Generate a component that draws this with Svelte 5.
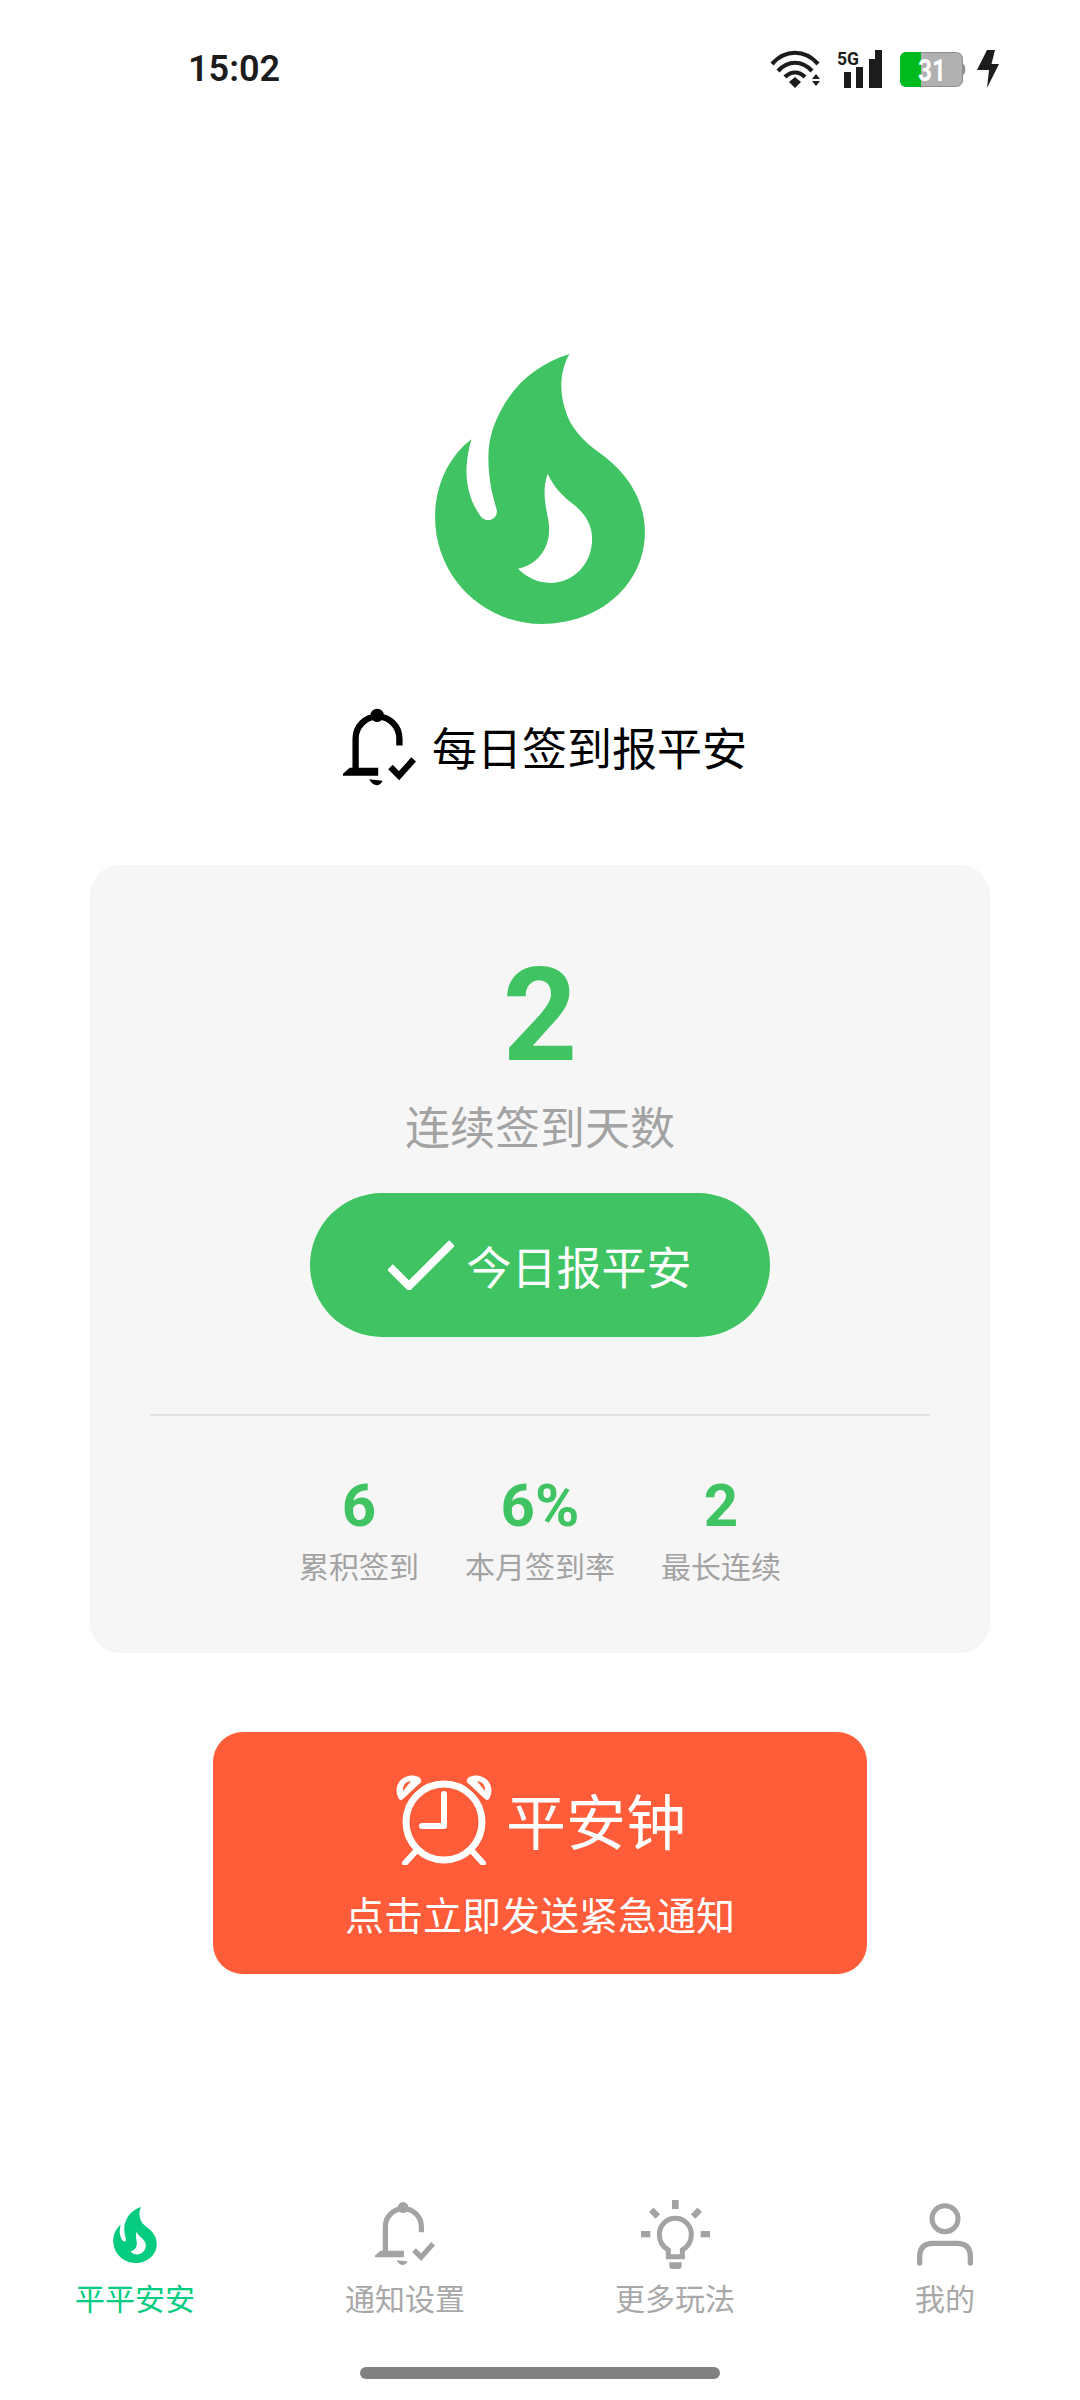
<script lang="ts">
  // 每日签到 home screen
  const stats = [
    { value: '6', label: '累积签到' },
    { value: '6%', label: '本月签到率' },
    { value: '2', label: '最长连续' }
  ];
  const flame =
    'M507 72C400 105 320 180 280 290C262 340 262 390 268 440C272 480 282 510 290 540C292 565 262 580 243 560C210 515 180 440 214 327C150 375 105 460 105 560C105 740 250 880 425 880C600 880 733 760 733 605C733 500 670 420 600 370C540 325 510 290 495 240C475 180 480 120 507 72ZM442 430C425 480 435 520 442 560C460 640 420 700 353 715C385 745 415 757 450 757C520 757 575 700 575 625C575 575 545 540 510 515C480 490 458 465 442 430Z';
</script>

{#snippet bell(cls)}
  <svg class={cls} viewBox="72 78 220 238" aria-hidden="true">
    <circle cx="175" cy="100" r="20" fill="currentColor" />
    <path d="M242 191V170A66 66 0 0 0 110 170V272" fill="none" stroke="currentColor" stroke-width="19" />
    <path d="M72 282V276L92 258H178V282Z" fill="currentColor" />
    <path d="M151 293L191 297C186 312 165 320 151 293Z" fill="currentColor" />
    <path d="M215 256L241 282L285 233" fill="none" stroke="currentColor" stroke-width="19" />
  </svg>
{/snippet}

<div class="page">
  <header class="status">
    <span class="time">15:02</span>
    <div class="status-icons">
      <svg class="wifi" viewBox="0 0 52 38" aria-hidden="true">
        <g fill="none" stroke="#1c1c1c" stroke-width="4.2">
          <path d="M2 14C15 -1 35 -1 48 14" />
          <path d="M8 21C18 10 32 10 42 21" />
          <path d="M15 27C21 21 29 21 35 27" />
        </g>
        <path d="M25 27L31 32L25 38L19 32Z" fill="#1c1c1c" />
        <path d="M46 24L50 29H42ZM46 36L42 31H50Z" fill="#1c1c1c" />
      </svg>
      <svg class="signal" viewBox="0 0 46 38" aria-hidden="true">
        <text x="0" y="15" font-size="19" font-weight="700" textLength="22" lengthAdjust="spacingAndGlyphs" fill="#1c1c1c">5G</text>
        <rect x="7" y="22" width="7" height="16" fill="#1c1c1c" />
        <rect x="19" y="17" width="7" height="21" fill="#1c1c1c" />
        <rect x="32" y="9" width="7" height="29" fill="#1c1c1c" />
        <rect x="38" y="0" width="7" height="38" fill="#1c1c1c" />
      </svg>
      <svg class="battery" viewBox="0 0 66 35" aria-hidden="true">
        <rect x="0.5" y="0.5" width="62" height="34" rx="6" fill="#b0b0b0" stroke="#8e8e8e" />
        <path d="M6 0H21V35H6A6 6 0 0 1 0 29V6A6 6 0 0 1 6 0Z" fill="#00bb1e" />
        <path d="M63 12C66 13 66 22 63 23Z" fill="#8e8e8e" />
        <text x="18" y="29" font-size="31" font-weight="700" textLength="28" lengthAdjust="spacingAndGlyphs" fill="#fff">31</text>
      </svg>
      <svg class="bolt" viewBox="0 0 22 38" aria-hidden="true">
        <path d="M10 0H18L14.5 14H22L10 38L12 20H0Z" fill="#1c1c1c" />
      </svg>
    </div>
  </header>

  <svg class="logo" viewBox="105 72 628 808" aria-hidden="true">
    <path d={flame} fill="#40c463" fill-rule="evenodd" />
  </svg>

  <div class="title">
    {@render bell('title-bell')}
    <h1>每日签到报平安</h1>
  </div>

  <section class="card">
    <div class="streak">2</div>
    <div class="streak-label">连续签到天数</div>
    <button class="checkin">
      <svg class="tick" viewBox="0 0 66 50" aria-hidden="true">
        <path d="M2 27L21 46L64 3" fill="none" stroke="#fff" stroke-width="8" />
      </svg>
      今日报平安
    </button>
    <div class="rule"></div>
    <div class="stats">
      {#each stats as s}
        <div class="stat">
          <div class="stat-value">{s.value}</div>
          <div class="stat-label">{s.label}</div>
        </div>
      {/each}
    </div>
  </section>

  <button class="alarm">
    <span class="alarm-head">
      <svg class="clock" viewBox="0 0 100 92" aria-hidden="true">
        <circle cx="50" cy="49" r="38" fill="none" stroke="#fff" stroke-width="7" />
        <path d="M50 21V53H28" fill="none" stroke="#fff" stroke-width="6" stroke-linecap="round" stroke-linejoin="round" />
        <path d="M22 78L11 90M78 78L89 90" fill="none" stroke="#fff" stroke-width="6" stroke-linecap="round" />
        <path d="M4 24C-2 10 12 -2 25 4C28 7 28 9 25 11L9 26C7 28 5 27 4 24ZM96 24C102 10 88 -2 75 4C72 7 72 9 75 11L91 26C93 28 95 27 96 24Z" fill="#fff" />
        <path d="M9 18C8 12 13 8 17 8ZM91 18C92 12 87 8 83 8Z" fill="#ff5c3a" />
      </svg>
      <span class="alarm-title">平安钟</span>
    </span>
    <span class="alarm-sub">点击立即发送紧急通知</span>
  </button>

  <nav class="tabs">
    <div class="tab active">
      <span class="tab-icon">
        <svg class="tab-flame" viewBox="105 72 628 808" aria-hidden="true">
          <path d={flame} fill="currentColor" fill-rule="evenodd" />
        </svg>
      </span>
      <span>平平安安</span>
    </div>
    <div class="tab">
      <span class="tab-icon">{@render bell('tab-bell')}</span>
      <span>通知设置</span>
    </div>
    <div class="tab">
      <span class="tab-icon">
        <svg class="tab-bulb" viewBox="0 0 207 207" aria-hidden="true">
          <g fill="currentColor">
            <rect x="93" y="0" width="20" height="27" />
            <rect x="0" y="93" width="28" height="19" />
            <rect x="179" y="93" width="28" height="19" />
            <rect x="27" y="30" width="28" height="19" transform="rotate(45 41 39)" />
            <rect x="152" y="30" width="28" height="19" transform="rotate(-45 166 39)" />
            <path d="M85 187H122V198A9 9 0 0 1 113 207H94A9 9 0 0 1 85 198Z" />
          </g>
          <path d="M82 170V150C66 141 55 124 55 103A48 48 0 0 1 151 103C151 124 140 141 124 150V170Z" fill="none" stroke="currentColor" stroke-width="15" />
        </svg>
      </span>
      <span>更多玩法</span>
    </div>
    <div class="tab">
      <span class="tab-icon">
        <svg class="tab-user" viewBox="0 0 168 187" aria-hidden="true">
          <circle cx="84" cy="46" r="39" fill="none" stroke="currentColor" stroke-width="15" />
          <path d="M8 179V160Q8 120 48 120H120Q160 120 160 160V179" fill="none" stroke="currentColor" stroke-width="16" stroke-linecap="round" />
        </svg>
      </span>
      <span>我的</span>
    </div>
  </nav>
  <div class="home-bar"></div>
</div>

<style>
  :global(body) { margin: 0; background: #fff; }
  .page {
    height: 2400px; display: flex; flex-direction: column; align-items: center;
    background: #fff; color: #000;
    font-family: "Noto Sans CJK SC", "Noto Sans", sans-serif;
  }
  button { font-family: inherit; border: 0; cursor: pointer; padding: 0; }

  .status {
    align-self: stretch; height: 38px; margin-top: 50px;
    display: flex; align-items: center; justify-content: space-between;
    padding: 0 81px 0 188px;
  }
  .time { font: 600 36px/38px Roboto, sans-serif; color: #1c1c1c; }
  .status-icons { display: flex; align-items: center; gap: 15px; }
  .status-icons text { font-family: Roboto, sans-serif; }
  .wifi { width: 52px; height: 38px; }
  .signal { width: 46px; height: 38px; margin-left: 0; }
  .battery { width: 66px; height: 35px; margin-left: 2px; }
  .bolt { width: 22px; height: 38px; margin-left: -4px; }

  .logo { width: 210px; height: 270px; margin-top: 266px; display: block; }

  .title { display: flex; align-items: center; gap: 16px; margin-top: 83px; margin-left: 10px; height: 80px; }
  .title-bell { width: 73px; height: 79px; display: block; }
  h1 { margin: 0; font-size: 45px; font-weight: 400; line-height: 60px; }

  .card {
    width: 900px; height: 788px; box-sizing: border-box; margin-top: 78px; padding-top: 76px;
    background: #f6f6f6; border-radius: 30px;
    display: flex; flex-direction: column; align-items: center;
  }
  .streak { font: 700 130px/150px Roboto, sans-serif; color: #40c463; }
  .streak-label { font-size: 45px; line-height: 60px; color: #a3a3a3; margin-top: 5px; }
  .checkin {
    width: 460px; height: 144px; margin-top: 37px; border-radius: 72px;
    background: #40c463; color: #fff; font-size: 45px;
    display: flex; align-items: center; justify-content: center; gap: 12px;
  }
  .tick { width: 66px; height: 50px; display: block; }
  .rule { width: 780px; height: 2px; background: #e2e2e2; margin-top: 77px; }
  .stats { display: flex; gap: 46px; margin-top: 55px; }
  .stat { display: flex; flex-direction: column; align-items: center; }
  .stat-value { font: 700 60px/70px Roboto, sans-serif; color: #40c463; }
  .stat-label { font-size: 30px; line-height: 40px; color: #a3a3a3; margin-top: 4px; }

  .alarm {
    width: 654px; height: 242px; margin-top: 79px; border-radius: 30px;
    background: #ff5c3a; color: #fff;
    display: flex; flex-direction: column; align-items: center; padding-top: 41px; box-sizing: border-box;
  }
  .alarm-head { display: flex; align-items: center; gap: 12px; height: 92px; }
  .clock { width: 100px; height: 92px; display: block; }
  .alarm-title { font-size: 60px; line-height: 80px; }
  .alarm-sub { font-size: 39px; line-height: 52px; margin-top: 22px; }

  .tabs {
    align-self: stretch; margin-top: auto;
    display: grid; grid-template-columns: repeat(4, 1fr);
  }
  .tab {
    display: flex; flex-direction: column; align-items: center;
    font-size: 30px; line-height: 40px; color: #a8a8a8;
  }
  .tab.active { color: #05cc80; }
  .tab-icon { height: 70px; display: flex; align-items: center; justify-content: center; color: #a3a3a3; margin-bottom: 8px; }
  .tab.active .tab-icon { color: #05cc80; }
  .tab-flame { width: 44px; height: 56px; display: block; margin-top: 2px; }
  .tab-bell { width: 60px; height: 66px; display: block; }
  .tab-bulb { width: 69px; height: 69px; display: block; }
  .tab-user { width: 56px; height: 63px; display: block; }

  .home-bar { width: 360px; height: 12px; border-radius: 6px; background: #808080; margin: 50px 0 21px; }
</style>
